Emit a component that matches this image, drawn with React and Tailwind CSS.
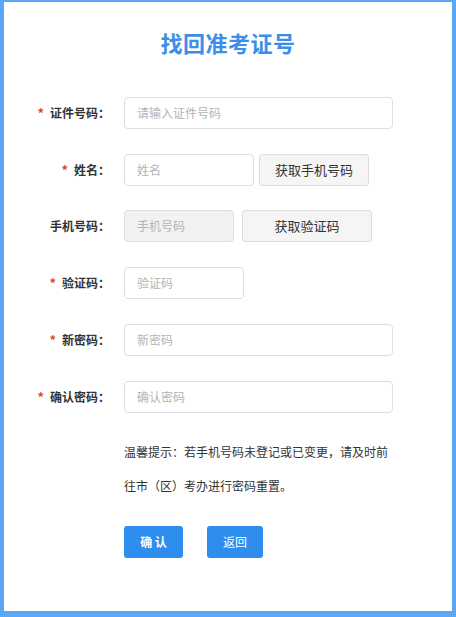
import React from "react";

const font = { fontFamily: '"Microsoft YaHei", "Noto Sans CJK SC", sans-serif' };

function Label({ text, required }) {
  return (
    <div className="w-[106px] shrink-0 flex items-center justify-end text-[12px] font-bold text-[#333]">
      {required && <span className="text-[#e0463a] mr-[6px] text-[13px]">*</span>}
      <span>{text}</span>
    </div>
  );
}

function Input({ placeholder, w, disabled }) {
  return (
    <div
      className={`${w} h-[32px] rounded-[4px] border border-[#dcdfe6] flex items-center pl-[12px] text-[12px] text-[#b4b4b4] ${disabled ? "bg-[#f2f2f2]" : "bg-white"}`}
    >
      {placeholder}
    </div>
  );
}

function GrayBtn({ text, w, ml }) {
  return (
    <div className={`${w} ${ml} h-[32px] rounded-[3px] border border-[#dcdcdc] bg-[#f5f5f5] flex items-center justify-center text-[13px] text-[#333]`}>
      {text}
    </div>
  );
}

function Row({ children, mb = "mb-[25px]" }) {
  return <div className={`flex items-center ${mb}`}>{children}</div>;
}

export default function App() {
  return (
    <div className="w-[456px] h-[617px] bg-[#5aa6f7] pl-[4px] pt-[2px] pr-[4px] pb-[6px]" style={font}>
      <div className="w-full h-full bg-white pt-[27px]">
        <div className="text-center text-[22px] font-bold text-[#3d8ee8] leading-[26px] tracking-[0.5px]">找回准考证号</div>
        <div className="mt-[42px]">
          <Row>
            <Label text="证件号码：" required />
            <div className="ml-[14px]"><Input placeholder="请输入证件号码" w="w-[269px]" /></div>
          </Row>
          <Row mb="mb-[24px]">
            <Label text="姓名：" required />
            <div className="ml-[14px] flex">
              <Input placeholder="姓名" w="w-[130px]" />
              <GrayBtn text="获取手机号码" w="w-[110px]" ml="ml-[5px]" />
            </div>
          </Row>
          <Row>
            <Label text="手机号码：" />
            <div className="ml-[14px] flex">
              <Input placeholder="手机号码" w="w-[110px]" disabled />
              <GrayBtn text="获取验证码" w="w-[130px]" ml="ml-[8px]" />
            </div>
          </Row>
          <Row>
            <Label text="验证码：" required />
            <div className="ml-[14px]"><Input placeholder="验证码" w="w-[120px]" /></div>
          </Row>
          <Row>
            <Label text="新密码：" required />
            <div className="ml-[14px]"><Input placeholder="新密码" w="w-[269px]" /></div>
          </Row>
          <Row mb="mb-[22px]">
            <Label text="确认密码：" required />
            <div className="ml-[14px]"><Input placeholder="确认密码" w="w-[269px]" /></div>
          </Row>
          <div className="ml-[120px] w-[270px] text-[12px] leading-[34px] text-[#333]">
            温馨提示：若手机号码未登记或已变更，请及时前往市（区）考办进行密码重置。
          </div>
          <div className="ml-[120px] mt-[23px] flex">
            <div className="w-[59px] h-[32px] rounded-[3px] bg-[#2e8eee] flex items-center justify-center text-white text-[12px] font-bold">确 认</div>
            <div className="ml-[24px] w-[56px] h-[32px] rounded-[3px] bg-[#2e8eee] flex items-center justify-center text-white text-[12px]">返回</div>
          </div>
        </div>
      </div>
    </div>
  );
}
